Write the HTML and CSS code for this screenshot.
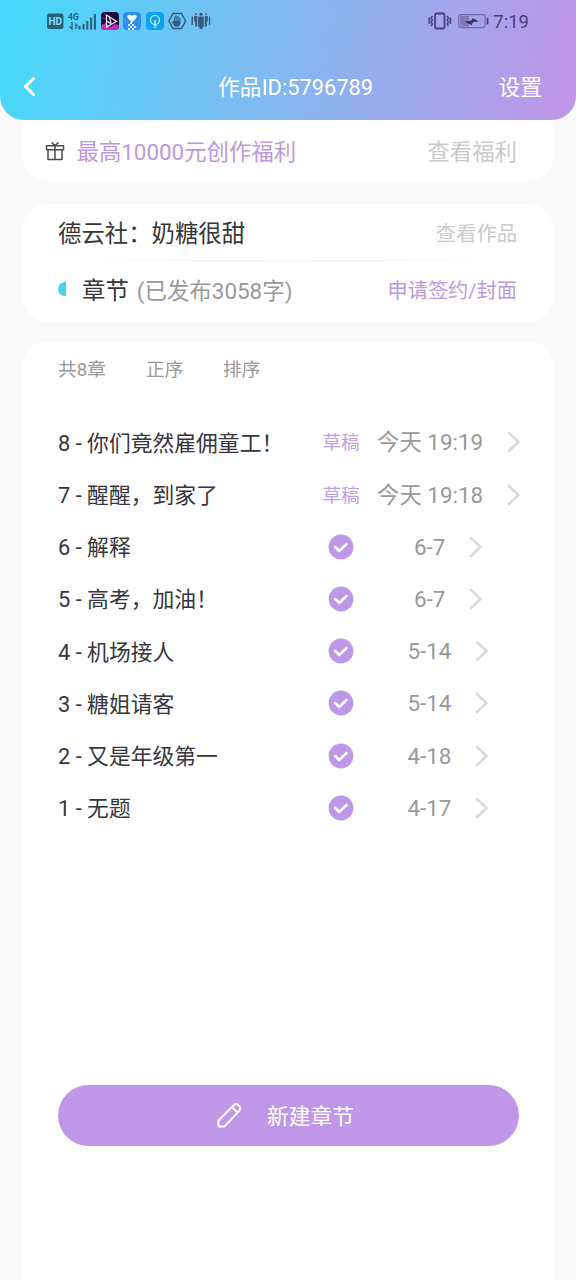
FILE: index.html
```html
<!DOCTYPE html>
<html lang="zh-CN">
<head>
<meta charset="utf-8">
<title>作品ID:5796789</title>
<link rel="stylesheet" href="styles.css">
</head>
<body>
<svg class="defs" width="0" height="0">
  <symbol id="chevron" viewBox="0 0 14 22"><path d="M2 2l9.500 9L2 20" fill="none" stroke="#dadada" stroke-width="2.600" stroke-linecap="round" stroke-linejoin="miter"/></symbol>
  <symbol id="check" viewBox="0 0 26 26"><circle cx="13" cy="13" r="12.400" fill="#bf97e8"/><path d="M7.200 13l4 4 7.400-7" fill="none" stroke="#fff" stroke-width="2.600" stroke-linecap="round" stroke-linejoin="miter"/></symbol>
</svg>
<header class="header">
  <div class="status-bar">
    <svg class="status-left" width="164" height="22" viewBox="0 0 164 22">
      <rect x="0" y="3.500" width="16.500" height="15.500" rx="2.500" fill="#25607c"/>
      <text x="8.200" y="15.200" class="hd">HD</text>
      <text x="21" y="9.500" class="net">4G</text>
      <path d="M25 12v7l-2.500-2.500M29 19v-4.500l1.500 1.500" fill="none" stroke="#25607c" stroke-width="1.300"/>
      <path d="M32.500 16v3.500M36.500 14v5.500M40.300 11v8.500M44.100 7.500v12M47.900 4v15.500" stroke="#25607c" stroke-width="2" fill="none"/>
      <rect x="54" y="2" width="18" height="18" rx="4" fill="#1d0b3c"/>
      <path d="M54 15l5-2 4 4 5-3 4 1v1a4 4 0 0 1-4 4H58a4 4 0 0 1-4-4z" fill="#c32bb5"/>
      <path d="M55 8l4 1M57 4l3 3M69 15l3 1" stroke="#7a2fd0"/>
      <path d="M59.500 5v12l10-5.500zM59.500 11l5 3M62 6l2 7" fill="none" stroke="#f4eafa" stroke-width="1.200"/>
      <rect x="76" y="2" width="18" height="18" rx="4" fill="#2f8eed"/>
      <path d="M85 12.500l-4.200-4.200c-2-2.600 1.800-5 4.200-2.400 2.400-2.600 6.200-.2 4.200 2.400z" fill="#e9fbff"/>
      <path d="M81 14h2v2h-2zM85 14h2v2h-2zM83 16h2v2h-2zM87 16h2v2h-2zM81 18h2v2h-2zM85 18h2v2h-2zM83 12h2v2h-2z" fill="#d5efff"/>
      <rect x="99" y="2" width="18" height="18" rx="4" fill="#09a3ee"/>
      <circle cx="108" cy="10" r="4.500" fill="none" stroke="#dcf7ff" stroke-width="1.200"/>
      <path d="M106 15h4M106.500 17h3M108 10v4" stroke="#dcf7ff" stroke-width="1.200"/>
      <path d="M126 3.500h8.500l4.100 7.500-4.100 7.500H126L121.900 11z" fill="none" stroke="#315b83" stroke-width="1.500"/>
      <path d="M126.500 8v4l-1-.8-.8.8 3 4.500h4l1.800-3V8h-1.300v3h-.6V6h-1.300v5h-.6V5.500h-1.300V11h-.6V6.500H127V11z" fill="#315b83"/>
      <path d="M144.500 6.500h1.500v8.500h-1.500zM147.200 6h3v10.500h-2V11.500h-1zM151.200 6.500h5.600v10.500h-1.300v2h-3v-2h-1.300zM157.800 6h3v5.500h-1v5h-2zM162 6.500h1.200V15H162z" fill="#39597f"/>
      <circle cx="149" cy="4.200" r=".9" fill="#39597f"/><circle cx="154" cy="4.300" r="1.500" fill="#39597f"/><circle cx="159" cy="4.200" r=".9" fill="#39597f"/>
    </svg>
    <div class="status-right">
      <svg width="62" height="22" viewBox="0 0 62 22" fill="none">
        <rect x="8" y="3.500" width="9.500" height="15" rx="1.500" stroke="#49427b" stroke-width="1.800"/>
        <path d="M5.500 6L4 8l1.500 2L4 12l1.500 2L4 16M2.800 7.500l-1 1.500 1 1.500-1 1.500 1 2M20 6l1.500 2-1.500 2 1.500 2-1.500 2 1.500 2M22.800 7.500l1 1.500-1 1.500 1 1.500-1 2" stroke="#49427b" stroke-width="1.400"/>
        <rect x="31.600" y="4.600" width="26.500" height="13" rx="2.500" stroke="#756aa8" stroke-width="1.200"/>
        <rect x="33" y="6" width="9" height="10.500" fill="#8577b7"/>
        <path d="M37.500 11.500l7-1 1-2.500 6.500 3.500-6 .7-1.500 3z" fill="#3c3567"/>
        <path d="M60.500 8v6.500" stroke="#49427b" stroke-width="1.800"/>
      </svg>
      <span class="clock">7:19</span>
    </div>
  </div>
  <nav class="nav">
    <svg class="back" width="16" height="22" viewBox="0 0 16 22"><path d="M11.500 2.500L3.500 10.500l8 8" fill="none" stroke="#fff" stroke-width="3" stroke-linecap="round"/></svg>
    <h1 class="nav-title">作品ID:5796789</h1>
    <span class="settings">设置</span>
  </nav>
</header>
<main class="content">
  <section class="card promo">
    <svg class="gift" width="20" height="20" viewBox="0 0 20 20" fill="none" stroke="#4b4b50" stroke-width="1.500" stroke-linejoin="round"><path d="M1.500 3.800h17v4h-17zM3 7.800h14v9.700H3zM10 3.800v13.700M6.500 .5L10 3.600 13.500 .5"/></svg>
    <span class="promo-text">最高10000元创作福利</span>
    <span class="promo-link">查看福利</span>
  </section>
  <section class="card work">
    <div class="work-row work-head">
      <span class="work-name">德云社：奶糖很甜</span>
      <span class="work-link">查看作品</span>
    </div>
    <div class="divider"></div>
    <div class="work-row work-info">
      <i class="half-dot"></i>
      <span class="section-name">章节</span>
      <span class="count">(已发布3058字)</span>
      <span class="apply">申请签约/封面</span>
    </div>
  </section>
  <section class="card chapters">
    <div class="tools"><span class="total">共8章</span><span class="order">正序</span><span>排序</span></div>
    <ul class="list">
      <li class="row"><span class="title">8 - 你们竟然雇佣童工！</span><span class="state">草稿</span><span class="date draft">今天 19:19<svg class="arrow"><use href="#chevron"/></svg></span></li>
      <li class="row"><span class="title">7 - 醒醒，到家了</span><span class="state">草稿</span><span class="date draft">今天 19:18<svg class="arrow"><use href="#chevron"/></svg></span></li>
      <li class="row"><span class="title">6 - 解释</span><span class="state"><svg class="check"><use href="#check"/></svg></span><span class="date short">6-7<svg class="arrow"><use href="#chevron"/></svg></span></li>
      <li class="row"><span class="title">5 - 高考，加油！</span><span class="state"><svg class="check"><use href="#check"/></svg></span><span class="date short">6-7<svg class="arrow"><use href="#chevron"/></svg></span></li>
      <li class="row"><span class="title">4 - 机场接人</span><span class="state"><svg class="check"><use href="#check"/></svg></span><span class="date">5-14<svg class="arrow"><use href="#chevron"/></svg></span></li>
      <li class="row"><span class="title">3 - 糖姐请客</span><span class="state"><svg class="check"><use href="#check"/></svg></span><span class="date">5-14<svg class="arrow"><use href="#chevron"/></svg></span></li>
      <li class="row"><span class="title">2 - 又是年级第一</span><span class="state"><svg class="check"><use href="#check"/></svg></span><span class="date">4-18<svg class="arrow"><use href="#chevron"/></svg></span></li>
      <li class="row"><span class="title">1 - 无题</span><span class="state"><svg class="check"><use href="#check"/></svg></span><span class="date">4-17<svg class="arrow"><use href="#chevron"/></svg></span></li>
    </ul>
    <button class="create">
      <svg width="26" height="26" viewBox="0 0 26 26" fill="none" stroke="#fff" stroke-width="2" stroke-linejoin="round"><path d="M2.500 24.500v-6L18 3q2-2 4 0l1.500 1.500q2 2 0 4L8.500 24.500zM16 5l5.500 5.500"/></svg>
      <span>新建章节</span>
    </button>
  </section>
</main>
</body>
</html>
```
FILE: styles.css
```css
* { box-sizing: border-box; }
body {
  margin: 0;
  height: 1280px;
  display: flex;
  flex-direction: column;
  overflow: hidden;
  background: #f9f9f9;
  font-family: Roboto, "Noto Sans CJK SC", sans-serif;
  line-height: 30px;
  color: #36363b;
  white-space: nowrap;
}
.defs { position: absolute; }
.header {
  height: 120px;
  flex: none;
  border-radius: 0 0 24px 24px;
  background: linear-gradient(102deg, #48d8f9 3%, #bf96e8 98%);
}
.status-bar {
  height: 42px;
  padding: 0 47px;
  display: flex;
  align-items: center;
  justify-content: space-between;
}
.status-left { display: block; }
.hd { font: 700 10px Roboto, sans-serif; fill: #8fdcf5; text-anchor: middle; }
.net { font: 700 8.500px Roboto, sans-serif; fill: #25607c; }
.status-right { display: flex; align-items: center; gap: 4px; color: #49427b; }
.clock { font-size: 18.500px; line-height: 22px; padding-top: 1px; }
.nav {
  height: 89px;
  padding: 0 34px 0 22px;
  display: grid;
  grid-template-columns: 60px 1fr 60px;
  align-items: center;
  color: #fff;
  font-size: 21.800px;
}
.nav-title { margin: 0 0 0 27px; padding-top: 2px; font: inherit; text-align: center; }
.settings { text-align: right; padding-top: 3px; }
.content { flex: 1; display: flex; flex-direction: column; padding: 0 23px; }
.card { background: #fff; border-radius: 24px; }
.promo {
  height: 61px;
  border-radius: 0 0 24px 24px;
  display: flex;
  align-items: center;
  padding: 3px 36px 0 22px;
  font-size: 22.400px;
}
.promo-text { margin-left: 11.500px; color: #bd98dc; }
.promo-link { margin-left: auto; color: #cacaca; }
.work { height: 118px; margin-top: 23px; padding: 0 36px 0 35px; }
.work-row { display: flex; align-items: center; }
.work-head { height: 56px; padding-top: 4px; }
.work-name { font-size: 23.400px; }
.work-link { margin-left: auto; font-size: 20.300px; color: #cacaca; }
.divider { height: 1px; background: linear-gradient(90deg, #fff, #eee 50%, #fff); }
.work-info { height: 58px; padding-top: 1px; }
.half-dot { width: 8px; height: 14px; margin-bottom: 3px; border-radius: 8px 0 0 8px; background: #4dd0eb; }
.section-name { margin-left: 16px; padding-top: 1px; font-size: 23.400px; }
.count { margin-left: 8px; font-size: 22.450px; color: #999; }
.apply { margin-left: auto; padding-top: 1px; font-size: 20.200px; color: #bd98e0; }
.chapters { height: 940px; margin-top: 19px; padding: 15px 35px 0; border-radius: 24px 24px 0 0; }
.tools { display: flex; height: 28px; line-height: 28px; font-size: 18.700px; color: #999; }
.total { width: 88px; }
.order { width: 77px; }
.list { list-style: none; margin: 32.300px 0 0; padding: 0; }
.row { height: 52.200px; display: grid; grid-template-columns: 256px 54px 1fr; align-items: center; }
.title { padding-top: 3px; font-size: 21.800px; }
.state { display: flex; justify-content: center; align-items: center; height: 34px; padding-top: 2px; font-size: 18.600px; color: #c29ee5; }
.check { width: 26px; height: 26px; margin-bottom: 2px; }
.date { display: flex; align-items: center; padding-left: 39.500px; font-size: 22.400px; color: #999; }
.date.short { padding-left: 46px; }
.date.draft { padding-left: 9px; }
.arrow { width: 14px; height: 22px; margin-left: 24px; }
.create {
  width: 461px;
  height: 61px;
  margin-top: 251.100px;
  border: 0;
  border-radius: 31px;
  background: #bf97e8;
  color: #fff;
  font: 21.800px/30px Roboto, "Noto Sans CJK SC", sans-serif;
  display: flex;
  align-items: center;
  justify-content: center;
  gap: 25px;
  padding: 0 7px 0 0;
}
.create span { padding-top: 4px; }
```
